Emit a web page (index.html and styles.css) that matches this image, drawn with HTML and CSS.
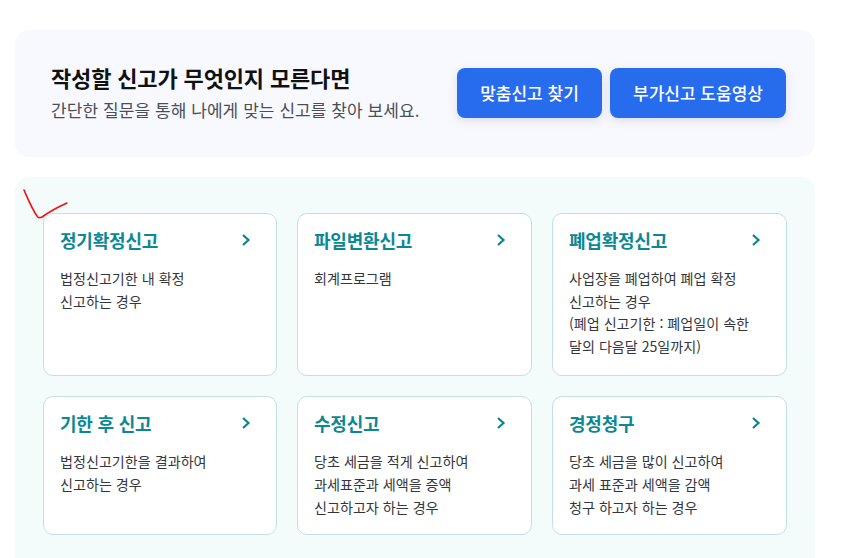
FILE: index.html
```html
<!DOCTYPE html>
<html lang="ko">
<head>
<meta charset="utf-8">
<title>신고 안내</title>
<link rel="stylesheet" href="styles.css">
</head>
<body>
<main class="page">
  <section class="banner">
    <div class="banner-text">
      <h1>작성할 신고가 무엇인지 모른다면</h1>
      <p>간단한 질문을 통해 나에게 맞는 신고를 찾아 보세요.</p>
    </div>
    <div class="banner-actions">
      <a class="btn btn-find">맞춤신고 찾기</a>
      <a class="btn btn-video">부가신고 도움영상</a>
    </div>
  </section>
  <section class="panel">
    <svg class="scribble" width="50" height="36" viewBox="0 0 50 36"><path d="M1 1 C5 10 9 20 14 27 C15 29 17 29 19 28 C26 23 35 18 44 14" fill="none" stroke="#f01010" stroke-width="1.6" stroke-linecap="round"/></svg>
    <div class="grid">
      <article class="card">
        <header><h2>정기확정신고</h2><svg class="chev" width="10" height="14" viewBox="0 0 10 14"><path d="M2 2 L7.5 7 L2 12" fill="none" stroke="#0c8390" stroke-width="2.2"/></svg></header>
        <p>법정신고기한 내 확정<br>신고하는 경우</p>
      </article>
      <article class="card">
        <header><h2>파일변환신고</h2><svg class="chev" width="10" height="14" viewBox="0 0 10 14"><path d="M2 2 L7.5 7 L2 12" fill="none" stroke="#0c8390" stroke-width="2.2"/></svg></header>
        <p>회계프로그램</p>
      </article>
      <article class="card">
        <header><h2>폐업확정신고</h2><svg class="chev" width="10" height="14" viewBox="0 0 10 14"><path d="M2 2 L7.5 7 L2 12" fill="none" stroke="#0c8390" stroke-width="2.2"/></svg></header>
        <p>사업장을 폐업하여 폐업 확정<br>신고하는 경우<br>(폐업 신고기한 : 폐업일이 속한<br>달의 다음달 25일까지)</p>
      </article>
      <article class="card">
        <header><h2>기한 후 신고</h2><svg class="chev" width="10" height="14" viewBox="0 0 10 14"><path d="M2 2 L7.5 7 L2 12" fill="none" stroke="#0c8390" stroke-width="2.2"/></svg></header>
        <p>법정신고기한을 결과하여<br>신고하는 경우</p>
      </article>
      <article class="card">
        <header><h2>수정신고</h2><svg class="chev" width="10" height="14" viewBox="0 0 10 14"><path d="M2 2 L7.5 7 L2 12" fill="none" stroke="#0c8390" stroke-width="2.2"/></svg></header>
        <p>당초 세금을 적게 신고하여<br>과세표준과 세액을 증액<br>신고하고자 하는 경우</p>
      </article>
      <article class="card">
        <header><h2>경정청구</h2><svg class="chev" width="10" height="14" viewBox="0 0 10 14"><path d="M2 2 L7.5 7 L2 12" fill="none" stroke="#0c8390" stroke-width="2.2"/></svg></header>
        <p>당초 세금을 많이 신고하여<br>과세 표준과 세액을 감액<br>청구 하고자 하는 경우</p>
      </article>
    </div>
  </section>
</main>
</body>
</html>
```
FILE: styles.css
```css
* { box-sizing: border-box; }
html, body { margin: 0; height: 558px; overflow: hidden; background: #fff; }
body { font-family: "Noto Sans CJK KR", "Noto Sans", sans-serif; }
.page { width: 800px; margin: 30px 0 0 15px; display: flex; flex-direction: column; gap: 20px; }
.banner {
  height: 127px; background: #f8f9fe; border-radius: 14px;
  padding: 0 29px 0 36px; display: flex; align-items: center; justify-content: space-between;
}
.banner-text { margin-top: -4px; }
.banner h1 { margin: 0; font-size: 22px; line-height: 32px; font-weight: 700; color: #111; letter-spacing: -0.15px; }
.banner p { margin: 4px 0 0; font-size: 17px; line-height: 26px; color: #4a4f57; letter-spacing: 0.07px; }
.banner-actions { display: flex; gap: 8px; margin-top: -2px; }
.btn {
  height: 50px; display: flex; align-items: center; justify-content: center;
  background: #276ced; color: #fff; border-radius: 8px; font-size: 17px; font-weight: 500;
  box-shadow: 0 3px 10px rgba(60, 70, 110, 0.14);
}
.btn-find { width: 145px; }
.btn-video { width: 176px; }
.panel { position: relative; background: #f3fbfb; border-radius: 14px 14px 0 0; padding: 36px 28px 28px; }
.scribble { position: absolute; left: 8px; top: 12px; }
.grid { display: grid; grid-template-columns: 234px 235px 235px; grid-template-rows: 163.4px 138.6px; gap: 20px; }
.card { background: #fff; border: 1px solid #c2e0e6; border-radius: 10px; padding: 13px 25px 0 16px; }
.card header { display: flex; align-items: center; justify-content: space-between; height: 27px; }
.card h2 { margin: 0; font-size: 18px; line-height: 27px; font-weight: 700; color: #0b8894; letter-spacing: -0.2px; }
.chev { display: block; margin-top: -2px; }
.card p { margin: 13px 0 0; font-size: 14.1px; line-height: 22.7px; color: #33373d; }
```
